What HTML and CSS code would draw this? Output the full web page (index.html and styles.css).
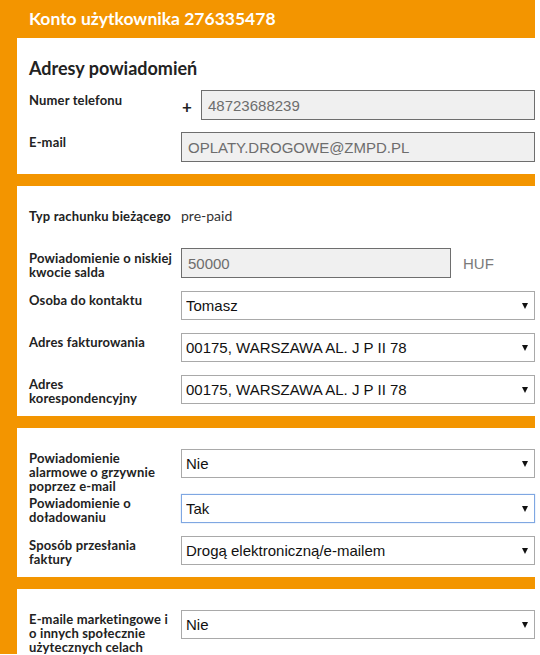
FILE: index.html
```html
<!DOCTYPE html>
<html lang="pl">
<head>
<meta charset="utf-8">
<title>Konto użytkownika</title>
<link rel="stylesheet" href="styles.css">
</head>
<body>
<div class="frame">
  <div class="head"><h1 class="title">Konto użytkownika 276335478</h1></div>

  <section class="panel">
    <h2 class="sub">Adresy powiadomień</h2>
    <div class="row">
      <label class="lbl">Numer telefonu</label>
      <div class="ctl">
        <span class="plus">+</span>
        <input class="inp ro grow" type="text" value="48723688239" disabled>
      </div>
    </div>
    <div class="row">
      <label class="lbl">E-mail</label>
      <div class="ctl">
        <input class="inp ro grow" type="text" value="OPLATY.DROGOWE@ZMPD.PL" disabled>
      </div>
    </div>
  </section>

  <section class="panel">
    <div class="row">
      <label class="lbl">Typ rachunku bieżącego</label>
      <div class="ctl"><span class="val">pre-paid</span></div>
    </div>
    <div class="row">
      <label class="lbl">Powiadomienie o niskiej<br>kwocie salda</label>
      <div class="ctl">
        <input class="inp ro short" type="text" value="50000" disabled>
        <span class="unit">HUF</span>
      </div>
    </div>
    <div class="row">
      <label class="lbl">Osoba do kontaktu</label>
      <div class="ctl"><div class="sel"><select><option>Tomasz</option></select></div></div>
    </div>
    <div class="row">
      <label class="lbl">Adres fakturowania</label>
      <div class="ctl"><div class="sel"><select><option>00175, WARSZAWA AL. J P II 78</option></select></div></div>
    </div>
    <div class="row">
      <label class="lbl">Adres<br>korespondencyjny</label>
      <div class="ctl"><div class="sel"><select><option>00175, WARSZAWA AL. J P II 78</option></select></div></div>
    </div>
  </section>

  <section class="panel">
    <div class="row">
      <label class="lbl">Powiadomienie<br>alarmowe o grzywnie<br>poprzez e-mail</label>
      <div class="ctl"><div class="sel"><select><option>Nie</option></select></div></div>
    </div>
    <div class="row">
      <label class="lbl">Powiadomienie o<br>doładowaniu</label>
      <div class="ctl"><div class="sel"><select class="focus"><option>Tak</option></select></div></div>
    </div>
    <div class="row">
      <label class="lbl">Sposób przesłania<br>faktury</label>
      <div class="ctl"><div class="sel"><select><option>Drogą elektroniczną/e-mailem</option></select></div></div>
    </div>
  </section>

  <section class="panel">
    <div class="row">
      <label class="lbl">E-maile marketingowe i<br>o innych społecznie<br>użytecznych celach</label>
      <div class="ctl"><div class="sel"><select><option>Nie</option></select></div></div>
    </div>
  </section>
</div>
</body>
</html>
```

FILE: styles.css
```css
html, body {
  margin: 0;
  padding: 0;
  background: #ffffff;
}

body {
  font-family: Lato, "Open Sans", sans-serif;
  color: #222;
  overflow: hidden;
}

.frame {
  width: 535px;
  background: #f39500;
  padding-left: 17px;
  box-sizing: border-box;
}

.head {
  height: 38px;
  display: flex;
  align-items: center;
  margin-left: -17px;
  padding-left: 29px;
}

.title {
  margin: 0;
  font-size: 17.5px;
  font-weight: 700;
  color: #ffffff;
  line-height: 22px;
}

.panel {
  background: #ffffff;
  padding: 20px 0 0 12px;
  margin-bottom: 12px;
}

.sub {
  margin: 0 0 12px 0;
  font-size: 18px;
  font-weight: 700;
  line-height: 20px;
  color: #222;
}

.row {
  display: flex;
  align-items: flex-start;
}

.lbl {
  width: 152px;
  flex: none;
  padding-top: 3px;
  font-size: 13px;
  line-height: 14px;
  font-weight: 700;
  letter-spacing: 0.15px;
  white-space: nowrap;
  color: #222;
}

.ctl {
  flex: 1;
  display: flex;
  align-items: center;
  height: 30px;
  margin-bottom: 12px;
  min-width: 0;
}

.val {
  align-self: flex-start;
  padding-top: 2px;
  font-size: 14px;
  line-height: 16px;
  color: #333;
}

.plus {
  width: 20px;
  flex: none;
  padding-left: 1px;
  box-sizing: border-box;
  font-family: Lato, sans-serif;
  font-size: 17px;
  font-weight: 700;
  color: #222;
  margin-top: 2px;
}

.inp {
  box-sizing: border-box;
  height: 30px;
  margin: 0;
  padding: 0 6px;
  font-family: "Liberation Sans", Arial, sans-serif;
  font-size: 15px;
  border: 1px solid #6e6e6e;
  border-radius: 0;
  outline: none;
}

.ro {
  background: #f0f0f0;
  color: #6d6d6d;
  -webkit-text-fill-color: #6d6d6d;
  opacity: 1;
}

.grow {
  flex: 1;
  min-width: 0;
}

.short {
  width: 270px;
  flex: none;
}

.unit {
  margin-left: 12px;
  font-family: "Liberation Sans", Arial, sans-serif;
  font-size: 15px;
  color: #7a7a7a;
}

.sel {
  position: relative;
  flex: 1;
  height: 29px;
  margin-top: 1px;
  align-self: flex-start;
}

.sel select {
  -webkit-appearance: none;
  appearance: none;
  box-sizing: border-box;
  width: 100%;
  height: 29px;
  margin: 0;
  padding: 0 20px 0 4px;
  background: #ffffff;
  border: 1px solid #a9a9a9;
  border-radius: 0;
  font-family: "Liberation Sans", Arial, sans-serif;
  font-size: 15px;
  color: #111;
  outline: none;
}

.sel select.focus {
  border-color: #7fa7e2;
  box-shadow: 0 0 1px #9bbcec;
}

.sel::after {
  content: "";
  position: absolute;
  right: 7px;
  top: 12px;
  width: 0;
  height: 0;
  border-left: 3.5px solid transparent;
  border-right: 3.5px solid transparent;
  border-top: 6px solid #111;
  pointer-events: none;
}
```
